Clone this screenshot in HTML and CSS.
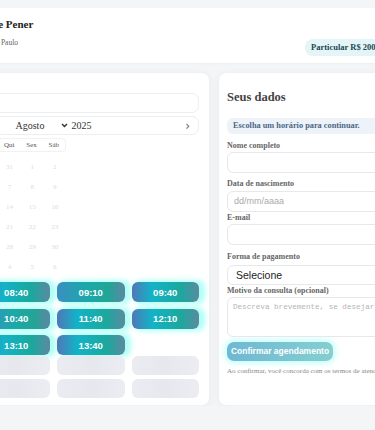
FILE: index.html
```html
<!DOCTYPE html>
<html lang="pt-BR">
<head>
    <meta charset="UTF-8">
    <meta name="viewport" content="width=device-width, initial-scale=1.0">
    <title>Agendar consulta</title>
    <link rel="stylesheet" href="styles.css">
</head>
<body>
    <div class="page">
        <header class="doctor">
            <div class="avatar"></div>
            <div class="doctor-info">
                <h1>Dr. Felipe Pener</h1>
                <p>Pediatra · São Paulo</p>
            </div>
            <span class="price">Particular R$ 200,00</span>
        </header>

        <main class="booking">
            <section class="card agenda">
                <div class="agenda-head">
                    <h2>Agenda</h2>
                    <div class="box search"></div>
                </div>

                <div class="box month-nav">
                    <span class="arrow">&lsaquo;</span>
                    <span class="month">
                        <span class="month-name">Agosto</span>
                        <svg width="7" height="5" viewBox="0 0 7 5"><path d="M1 1l2.5 2.5L6 1" fill="none" stroke="#333" stroke-width="1.4"/></svg>
                        <span class="year">2025</span>
                    </span>
                    <span class="arrow">&rsaquo;</span>
                </div>

                <div class="calendar">
                    <div class="weekdays">
                        <span>Dom</span><span>Seg</span><span>Ter</span><span>Qua</span><span>Qui</span><span>Sex</span><span>Sáb</span>
                    </div>
                    <div class="days" id="days"></div>
                </div>

                <div class="slots">
                    <button class="slot">08:10</button>
                    <button class="slot">08:40</button>
                    <button class="slot">09:10</button>
                    <button class="slot">09:40</button>
                    <button class="slot">10:10</button>
                    <button class="slot">10:40</button>
                    <button class="slot">11:40</button>
                    <button class="slot">12:10</button>
                    <button class="slot">12:40</button>
                    <button class="slot">13:10</button>
                    <button class="slot">13:40</button>
                </div>
                <div class="slots skeleton">
                    <span></span><span></span><span></span><span></span>
                    <span></span><span></span><span></span><span></span>
                </div>
            </section>

            <section class="card details">
                <h2>Seus dados</h2>
                <div class="notice">Escolha um horário para continuar.</div>

                <label class="label label-first" for="nome">Nome completo</label>
                <input class="input" type="text" id="nome">

                <label class="label" for="nasc">Data de nascimento</label>
                <input class="input input-date" type="text" id="nasc" placeholder="dd/mm/aaaa">

                <label class="label label-tight" for="email">E-mail</label>
                <input class="input" type="text" id="email">

                <label class="label label-pay" for="pag">Forma de pagamento</label>
                <div class="input select" id="pag">Selecione</div>

                <label class="label label-tight" for="motivo">Motivo da consulta (opcional)</label>
                <textarea class="input textarea" id="motivo" placeholder="Descreva brevemente, se desejar..."></textarea>

                <button class="confirm" disabled>Confirmar agendamento</button>
                <p class="terms">Ao confirmar, você concorda com os termos de atendimento da clínica.</p>
            </section>
        </main>
    </div>

    <script>
        // Agosto 2025 comeca numa sexta
        var days = [27, 28, 29, 30, 31];
        for (var d = 1; d <= 31; d++) days.push(d);
        for (var n = 1; n <= 6; n++) days.push(n);
        var grid = document.getElementById('days');
        days.forEach(function(day) {
            var cell = document.createElement('span');
            cell.textContent = day;
            grid.appendChild(cell);
        });
    </script>
</body>
</html>
```

FILE: styles.css
```css
body {
    margin: 0;
    background-color: #f4f5f7;
    font-family: "Liberation Serif", "Times New Roman", serif;
    color: #333;
    overflow: hidden;
}
.page {
    margin-left: -105px;
    width: 760px;
    padding-top: 8px;
}

/* cabecalho do profissional */
.doctor {
    display: flex;
    align-items: flex-end;
    gap: 12px;
    background-color: #fff;
    padding: 8px 16px 7px;
    box-shadow: 0 1px 2px rgba(0, 0, 0, 0.03);
}
.avatar {
    width: 28px;
    height: 28px;
    margin-right: 6px;
    border-radius: 50%;
    background-color: #e6eef2;
    align-self: center;
}
.doctor-info {
    flex: 0 0 336px;
}
.doctor-info h1 {
    font-size: 11px;
    line-height: 16px;
    margin: 0 0 5px;
    color: #222;
}
.doctor-info p {
    font-size: 7.5px;
    line-height: 12px;
    margin: 0 0 7px;
    color: #666;
}
.price {
    background-color: #e4f5f7;
    color: #1d4753;
    font-weight: bold;
    font-size: 8.5px;
    line-height: 17px;
    padding: 0 6px;
    border-radius: 8px;
    white-space: nowrap;
}

/* cards */
.booking {
    display: flex;
    gap: 8px;
    margin-top: 9px;
}
.card {
    background-color: #fff;
    border: 1px solid #eef0f2;
    border-radius: 8px;
    box-shadow: 0 2px 8px rgba(0, 0, 0, 0.04);
}
.agenda {
    flex: 0 0 291px;
    padding: 20px 10px 7px 12px;
}
.details {
    flex: 0 0 330px;
    padding: 16px 8px;
    display: flex;
    flex-direction: column;
    align-items: flex-start;
}
.box {
    border: 1px solid #eceef1;
    border-radius: 7px;
    background-color: #fff;
}

.agenda-head {
    display: flex;
    align-items: center;
    gap: 10px;
    height: 20px;
}
.agenda-head h2 {
    font-size: 13px;
    margin: 0;
    width: 60px;
}
.search {
    flex: 1;
    height: 18px;
}
.month-nav {
    margin-top: 3px;
    height: 17px;
    display: flex;
    align-items: center;
    justify-content: space-between;
    padding: 0 8px;
}
.arrow {
    font-family: "DejaVu Sans", sans-serif;
    font-size: 12px;
    color: #666;
}
.month {
    display: flex;
    align-items: center;
    font-size: 10px;
}
.month-name {
    width: 45px;
}
.year {
    margin-left: 4px;
}

.calendar {
    width: 158px;
}
.weekdays {
    margin-top: 3px;
    display: grid;
    grid-template-columns: repeat(7, 1fr);
    border: 1px solid #f0f1f3;
    border-radius: 4px;
    height: 12px;
    align-items: center;
    font-size: 7px;
    color: #555;
    text-align: center;
}
.days {
    margin-top: 5px;
    display: grid;
    grid-template-columns: repeat(7, 1fr);
    grid-auto-rows: 20px;
    align-items: center;
    text-align: center;
    font-size: 7px;
    color: #dcdcdc;
}

/* horarios */
.slots {
    margin-top: 5px;
    display: grid;
    grid-template-columns: repeat(4, 1fr);
    column-gap: 7px;
    row-gap: 6.5px;
}
.slot {
    height: 20px;
    border: none;
    border-radius: 6px;
    padding: 0;
    font-family: "Liberation Sans", Arial, sans-serif;
    font-weight: bold;
    font-size: 9.5px;
    color: #fff;
    background: linear-gradient(90deg, #4f78b8 0%, #13b3c7 30%, #1ba89e 72%, #5b8a9f 100%);
    box-shadow: 4px 0 5px 2px rgba(120, 255, 242, 0.6);
}
.slot:nth-child(3n) {
    background: linear-gradient(90deg, #3b8fc2 0%, #1aa9a9 45%, #22a597 75%, #5b88a2 100%);
}
.skeleton {
    margin-top: 1px;
    row-gap: 4px;
}
.skeleton span {
    height: 19px;
    border-radius: 6px;
    background: linear-gradient(90deg, #ebecf1, #e6e8ee 50%, #ecedf2);
}

/* formulario */
.details h2 {
    font-size: 12.5px;
    line-height: 16px;
    margin: 0;
    color: #444;
}
.notice {
    align-self: stretch;
    margin-top: 13px;
    background-color: #eef3f9;
    border-radius: 6px;
    padding: 3px 6px;
    font-size: 8.3px;
    line-height: 10px;
    font-weight: bold;
    color: #4d6787;
}
.label {
    margin-top: 5px;
    font-size: 8px;
    line-height: 11px;
    font-weight: bold;
    color: #666;
}
.label-first {
    margin-top: 5.5px;
}
.label-tight {
    margin-top: 0;
}
.label-pay {
    margin-top: 6.5px;
}
.input {
    box-sizing: border-box;
    align-self: stretch;
    margin: 1px 0 0;
    height: 21px;
    border: 1px solid #e6e8eb;
    border-radius: 6px;
    background-color: #fff;
    padding: 0 6px;
    font-family: "Liberation Sans", Arial, sans-serif;
    font-size: 9px;
}
.input-date {
    margin-top: 2px;
}
.input-date::placeholder {
    color: #aaa;
}
.select {
    margin-top: 2.5px;
    height: 20px;
    display: flex;
    align-items: center;
    padding: 0 8px;
    font-size: 10.5px;
    color: #222;
}
.textarea {
    margin-top: 1px;
    height: 40px;
    resize: none;
    padding: 5px 5px;
    font-family: "Liberation Mono", monospace;
    font-size: 7.6px;
}
.textarea::placeholder {
    color: #b5b5b5;
}
.confirm {
    margin-top: 5px;
    width: 106px;
    height: 19px;
    border: none;
    border-radius: 7px;
    padding: 0;
    font-family: "Liberation Sans", Arial, sans-serif;
    font-weight: bold;
    font-size: 8.5px;
    color: #fff;
    background: linear-gradient(90deg, #6fb8d4, #85cfd0);
    box-shadow: 0 0 5px 3px rgba(160, 255, 248, 0.55);
}
.terms {
    margin: 6px 0 0;
    font-size: 7px;
    line-height: 9px;
    color: #888;
    white-space: nowrap;
}
```
